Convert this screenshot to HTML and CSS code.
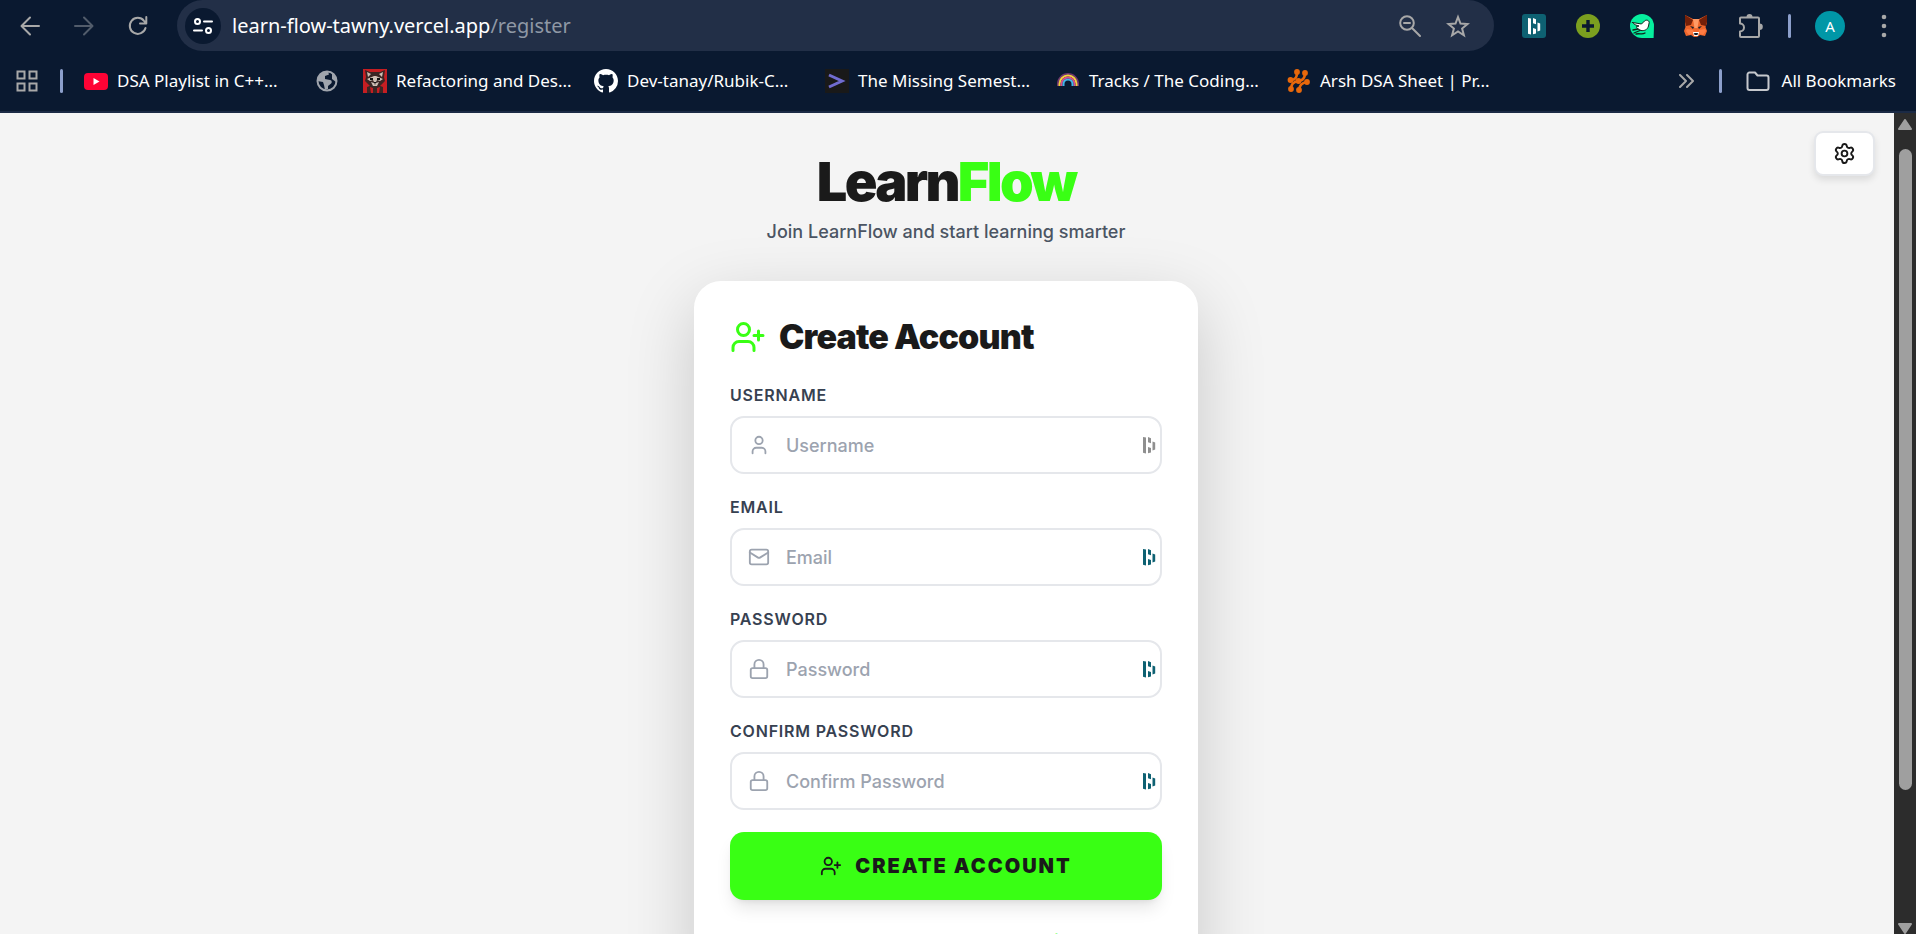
FILE: index.html
```
<!DOCTYPE html>
<html lang="en">
<head>
<meta charset="utf-8">
<title>LearnFlow - Register</title>
<link rel="stylesheet" href="styles.css">
</head>
<body>
<svg class="defs" aria-hidden="true">
  <symbol id="user-plus" viewBox="0 0 24 24"><path d="M16 21v-2a4 4 0 0 0-4-4H6a4 4 0 0 0-4 4v2"/><circle cx="9" cy="7" r="4"/><path d="M19 8v6M22 11h-6"/></symbol>
  <symbol id="user" viewBox="0 0 24 24"><path d="M19 21v-2a4 4 0 0 0-4-4H9a4 4 0 0 0-4 4v2"/><circle cx="12" cy="7" r="4"/></symbol>
  <symbol id="mail" viewBox="0 0 24 24"><rect x="2" y="4" width="20" height="16" rx="2"/><path d="m22 7-8.97 5.7a1.94 1.94 0 0 1-2.06 0L2 7"/></symbol>
  <symbol id="lock" viewBox="0 0 24 24"><rect x="3" y="11" width="18" height="11" rx="2"/><path d="M7 11V7a5 5 0 0 1 10 0v4"/></symbol>
  <symbol id="settings" viewBox="0 0 24 24"><path d="M9.671 4.136a2.34 2.34 0 0 1 4.659 0 2.34 2.34 0 0 0 3.319 1.915 2.34 2.34 0 0 1 2.33 4.033 2.34 2.34 0 0 0 0 3.831 2.34 2.34 0 0 1-2.33 4.033 2.34 2.34 0 0 0-3.319 1.915 2.34 2.34 0 0 1-4.659 0 2.34 2.34 0 0 0-3.32-1.915 2.34 2.34 0 0 1-2.33-4.033 2.34 2.34 0 0 0 0-3.831A2.34 2.34 0 0 1 6.35 6.051a2.34 2.34 0 0 0 3.319-1.915"/><circle cx="12" cy="12" r="3"/></symbol>
  <symbol id="vault" viewBox="0 0 14 18"><path fill="currentColor" stroke="none" d="M1 1l3 .6v15.800l-3-.6zM6 1l3 1.200v5l-3-1zM6 11l3 1v4.600l-3 .6zM10.500 5.500l2.700 1v7l-2.700 1z"/></symbol>
</svg>

<header class="browser">
  <div class="toolbar">
    <div class="nav">
      <button class="bare" aria-label="Back"><svg class="i20" viewBox="0 0 20 20"><path d="M19 10H2M10 1.500 1.500 10l8.500 8.500"/></svg></button>
      <button class="bare dim" aria-label="Forward"><svg class="i20" viewBox="0 0 20 20"><path d="M1 10h17M10 1.500l8.500 8.500-8.500 8.500"/></svg></button>
      <button class="bare" aria-label="Reload"><svg class="i20" viewBox="0 0 20 20"><path d="M17.500 12A8 8 0 1 1 16 4.800L18 7M18.300 1v6.500H12"/></svg></button>
    </div>
    <div class="omnibox">
      <button class="bare site" aria-label="View site information"><svg class="i20" viewBox="0 0 20 20"><circle cx="4.500" cy="5.500" r="2.500"/><path d="M11 5.500h8M1 14.500h8"/><circle cx="15.500" cy="14.500" r="2.500"/></svg></button>
      <span class="url">learn-flow-tawny.vercel.app<span class="path">/register</span></span>
      <button class="bare" aria-label="Zoom"><svg class="i24" viewBox="0 0 24 24"><circle cx="9" cy="9" r="6.800"/><path d="M14 14l8 8M6 9h6"/></svg></button>
      <button class="bare" aria-label="Bookmark this tab"><svg class="i24" viewBox="0 0 24 24"><path stroke-linejoin="miter" d="M12 3l2.500 6.500 7 .5-5.400 4.500 1.800 6.800L12 17.500l-5.900 3.800 1.800-6.800L2.500 10l7-.5z"/></svg></button>
    </div>
    <div class="extensions">
      <button class="bare ext-vault" aria-label="Password manager"><svg class="v" viewBox="0 0 14 18"><use href="#vault"/></svg></button>
      <button class="bare" aria-label="Add"><svg class="i24 solid" viewBox="0 0 24 24"><circle cx="12" cy="12" r="12" fill="#7b9f1f"/><path fill="#0a1930" d="M10.300 6h3.400v4.300H18v3.400h-4.300V18h-3.400v-4.300H6v-3.400h4.300z"/></svg></button>
      <button class="bare" aria-label="Bird"><svg class="i24 solid" viewBox="0 0 24 24"><path fill="#06ef9e" d="M12 0a12 12 0 0 1 12 12l-.4 12H12A12 12 0 0 1 12 0z"/><path fill="#fff" stroke="#10231c" stroke-width="1" d="M2.500 8.500l9 1.500 3-3c1.500-1.500 4.500-1 4.700 1.500L18.500 12c-1 4-4.500 5-7.500 4.500L8 15c-1-.6-1.500-1.600-1.500-2.500L9 12C6.500 11.500 4 10.500 2.500 8.500z"/><path fill="none" stroke="#10231c" stroke-width="1.300" d="M4 19l6-2.500M6 20c4-1 6 1 9-1M3 16l5-1"/></svg></button>
      <button class="bare" aria-label="Wallet"><svg class="i24 solid" viewBox="0 0 24 24"><path fill="#f0662b" d="M1 1l8 4h6l8-4 0 8-1.500 4 1.500 4-2 5-5-1-3 2h-3l-3-2-5 1-2-5 1.500-4L1 9z"/><path fill="#752008" d="M1 1l8 5-2 5-5 1L1 8zM23 1l-8 5 2 5 5 1 1-4z"/><path fill="#ff9a65" d="M9 5h6l-1.500 9h-3z"/><path fill="#ff7c43" d="M3 15l6 1 1 3-5 2-3-4zM21 15l-6 1-1 3 5 2 3-4z"/><path fill="#16202e" d="M6 12l4 1-1 2zM18 12l-4 1 1 2z"/><path fill="#fff" d="M9 18h6l-1 4h-4z"/><path fill="#16202e" d="M10 19h4l-.5 2h-3z"/></svg></button>
      <button class="bare" aria-label="Extensions"><svg class="puzzle" viewBox="0 0 26 26"><path d="M3 4.500H20a1 1 0 0 1 1 1V23a1 1 0 0 1-1 1H3a1 1 0 0 1-1-1v-4.500a4 4 0 0 0 0-8V5.500a1 1 0 0 1 1-1z"/><path fill="currentColor" stroke="none" d="M8.500 4a3 3 0 0 1 6 0zM21.500 10.500a3.300 3.300 0 0 1 0 6.600z"/></svg></button>
      <span class="rule"></span>
      <button class="bare avatar" aria-label="Profile">A</button>
      <button class="bare menu" aria-label="Menu"><svg viewBox="0 0 6 24" class="solid"><g fill="currentColor"><circle cx="3" cy="3" r="2.300"/><circle cx="3" cy="12" r="2.300"/><circle cx="3" cy="21" r="2.300"/></g></svg></button>
    </div>
  </div>
  <nav class="bookmarks" aria-label="Bookmarks">
    <button class="bare apps" aria-label="Apps"><svg class="i24" viewBox="0 0 24 24"><path stroke-linejoin="miter" d="M2.500 2.500h7v7h-7zM14.500 2.500h7v7h-7zM2.500 14.500h7v7h-7zM14.500 14.500h7v7h-7z"/></svg></button>
    <span class="rule"></span>
    <div class="links">
      <a class="mark" href="#"><svg class="i24 solid" viewBox="0 0 24 24"><rect y="4" width="24" height="17" rx="4" fill="#ff0335"/><path fill="#fff" d="M9.500 9l6 3.500-6 3.500z"/></svg><span>DSA Playlist in C++...</span></a>
      <a class="mark globe" href="#" aria-label="Website"><svg class="i24 solid" viewBox="0 0 24 24"><circle cx="12" cy="12" r="9.500" fill="none" stroke="#a0a5ad" stroke-width="2"/><path fill="#a0a5ad" d="M2 12C3 6 7 2 13 2.500l1 3-4 1.500v3l5 1c2 0 2.500 3 .5 4l-2.500 2v3l-3 1-1-5-1-3z M17 4l4 5v4l-4-3z"/></svg></a>
      <a class="mark" href="#"><svg class="i24 solid" viewBox="0 0 24 24"><path fill="#c51e22" d="M0 0h24v24H0z"/><path fill="#3b2624" d="M2 1l5 2h10l5-2-1 7 1 4-5 5H7l-5-5 1-4zM4 18l8-3 8 3v6H4z"/><path fill="#cfc0b5" d="M4 3l4 2-3 3zM20 3l-4 2 3 3zM4 10l7-3h2l7 3-3 2-3-1-2 4-2-4-3 1zM8 13l3 1 1 2 1-2 3-1-2 4h-4z"/><path fill="#111" d="M7 9h3v2H7zM14 9h3v2h-3zM11 13h2v1h-2z"/><path fill="#c51e22" d="M7 18l3 1v5H8zM17 18l-3 1v5h2z"/></svg><span>Refactoring and Des...</span></a>
      <a class="mark" href="#"><svg class="i24 solid" viewBox="0 0 16 16"><path fill="#fff" d="M8 0C3.580 0 0 3.580 0 8c0 3.540 2.290 6.530 5.470 7.590.4.070.55-.17.55-.38 0-.19-.01-.82-.01-1.490-2.010.37-2.530-.49-2.690-.94-.09-.23-.48-.94-.82-1.130-.28-.15-.68-.52-.01-.53.63-.01 1.080.58 1.230.82.72 1.210 1.870.87 2.330.66.070-.52.280-.87.510-1.070-1.780-.2-3.640-.89-3.640-3.950 0-.87.310-1.590.820-2.150-.08-.2-.36-1.020.080-2.120 0 0 .67-.21 2.200.82.64-.18 1.320-.27 2-.27s1.360.09 2 .27c1.530-1.040 2.200-.82 2.200-.82.44 1.100.16 1.920.080 2.120.51.56.820 1.270.820 2.150 0 3.070-1.870 3.750-3.650 3.950.29.25.540.730.540 1.480 0 1.070-.01 1.930-.01 2.200 0 .21.150.46.550.38A8.010 8.010 0 0 0 16 8c0-4.420-3.580-8-8-8z"/></svg><span>Dev-tanay/Rubik-C...</span></a>
      <a class="mark" href="#"><svg class="i24 solid" viewBox="0 0 24 24"><path fill="#191919" d="M0 0h24v24H0z"/><path fill="none" stroke="#706cd0" stroke-width="3" stroke-linecap="butt" stroke-linejoin="miter" d="M4 6l13 6-13 6"/></svg><span>The Missing Semest...</span></a>
      <a class="mark" href="#"><svg class="i24 solid" viewBox="0 0 24 24"><g fill="none" stroke-width="2" stroke-linecap="butt"><path stroke="#6f376f" d="M2 17v-2a10 10 0 0 1 20 0v2"/><path stroke="#f2d23c" d="M3.500 17v-2a8.500 8.500 0 0 1 17 0v2"/><path stroke="#d9508d" d="M5.500 17v-2a6.500 6.500 0 0 1 13 0v2"/><path stroke="#40b6e8" d="M7.500 17v-2a4.500 4.500 0 0 1 9 0v2"/></g></svg><span>Tracks / The Coding...</span></a>
      <a class="mark" href="#"><svg class="i24 solid" viewBox="0 0 24 24"><g fill="#e8680b"><circle cx="10" cy="3" r="2.900"/><circle cx="18" cy="4" r="2.900"/><circle cx="3.500" cy="11" r="2.900"/><circle cx="11.500" cy="12" r="2.900"/><circle cx="20" cy="13" r="2.900"/><circle cx="4" cy="20" r="2.900"/><circle cx="12" cy="21" r="2.900"/></g><path fill="none" stroke="#e8680b" stroke-width="2.600" d="M10 3c0 5-1 7.500-6.500 8M18 4c0 5-2 7.500-6.500 8-5 .5-7.500 3-7.500 8M20 13c-5 .5-7.500 3-8 8"/></svg><span>Arsh DSA Sheet | Pr...</span></a>
    </div>
    <button class="bare more" aria-label="More bookmarks"><svg viewBox="0 0 16 14"><path d="M2 1l6 6-6 6M9 1l6 6-6 6"/></svg></button>
    <span class="rule"></span>
    <a class="all" href="#"><svg class="i24" viewBox="0 0 24 24"><path d="M1.500 5.500a2 2 0 0 1 2-2H9l2.500 3h9a2 2 0 0 1 2 2V19a2 2 0 0 1-2 2h-17a2 2 0 0 1-2-2z"/></svg>All Bookmarks</a>
  </nav>
</header>

<div class="viewport">
  <main class="page">
    <button class="settings" aria-label="Settings"><svg viewBox="0 0 24 24"><use href="#settings"/></svg></button>
    <h1 class="logo">Learn<span>Flow</span></h1>
    <p class="tagline">Join LearnFlow and start learning smarter</p>
    <form class="card">
      <h2 class="heading"><svg viewBox="0 0 24 24"><use href="#user-plus"/></svg>Create Account</h2>
      <div class="field">
        <label for="username">Username</label>
        <div class="box"><svg class="lead" viewBox="0 0 24 24"><use href="#user"/></svg><input id="username" type="text" placeholder="Username"><svg class="v gray" viewBox="0 0 14 18"><use href="#vault"/></svg></div>
      </div>
      <div class="field">
        <label for="email">Email</label>
        <div class="box"><svg class="lead" viewBox="0 0 24 24"><use href="#mail"/></svg><input id="email" type="email" placeholder="Email"><svg class="v" viewBox="0 0 14 18"><use href="#vault"/></svg></div>
      </div>
      <div class="field">
        <label for="password">Password</label>
        <div class="box"><svg class="lead" viewBox="0 0 24 24"><use href="#lock"/></svg><input id="password" type="password" placeholder="Password"><svg class="v" viewBox="0 0 14 18"><use href="#vault"/></svg></div>
      </div>
      <div class="field">
        <label for="confirm">Confirm Password</label>
        <div class="box"><svg class="lead" viewBox="0 0 24 24"><use href="#lock"/></svg><input id="confirm" type="password" placeholder="Confirm Password"><svg class="v" viewBox="0 0 14 18"><use href="#vault"/></svg></div>
      </div>
      <button class="submit" type="submit"><svg viewBox="0 0 24 24"><use href="#user-plus"/></svg>Create Account</button>
      <p class="switch">Already have an account? <a href="#">Login</a></p>
    </form>
  </main>
  <div class="scrollbar" aria-hidden="true">
    <svg viewBox="0 0 14 11"><path d="M7 1l6 9H1z"/></svg>
    <span class="thumb"></span>
    <span class="rest"></span>
    <svg viewBox="0 0 14 11"><path d="M7 10L1 1h12z"/></svg>
  </div>
</div>
</body>
</html>
```
FILE: styles.css
```
* { box-sizing: border-box; }
body {
  margin: 0;
  height: 100vh;
  display: flex;
  flex-direction: column;
  overflow: hidden;
  font-family: Inter, "Liberation Sans", sans-serif;
}
h1, h2, p { margin: 0; }
button, input { font: inherit; }
button { cursor: pointer; }
svg {
  display: block;
  flex: none;
  fill: none;
  stroke: currentColor;
  stroke-width: 2;
  stroke-linecap: round;
  stroke-linejoin: round;
}
.defs { position: absolute; width: 0; height: 0; }
.solid { stroke: none; }

/* Browser chrome */
.browser {
  flex: none;
  background: #0a1930;
  border-bottom: 2px solid #1b2a45;
  color: #fff;
  font-family: "Noto Sans", "Open Sans", sans-serif;
}
.bare {
  display: flex;
  align-items: center;
  justify-content: center;
  padding: 0;
  border: 0;
  background: none;
  color: #a8a8a8;
}
.dim { color: #525c6b; }
.i20 { width: 20px; height: 20px; }
.i24 { width: 24px; height: 24px; }
.rule { flex: none; width: 3px; height: 24px; border-radius: 2px; background: #8c9fcb; }
.toolbar { display: flex; align-items: center; height: 51px; padding: 0 29px 0 20px; }
.nav { display: flex; gap: 34px; padding-right: 29px; }
.omnibox {
  flex: 1;
  display: flex;
  align-items: center;
  gap: 24px;
  height: 51px;
  padding: 0 24px 0 8px;
  border-radius: 26px;
  background: #222f47;
}
.site { width: 36px; height: 36px; border-radius: 50%; background: #0a1930; color: #fff; }
.url { flex: 1; margin-left: -13px; font-size: 20px; line-height: 26px; white-space: nowrap; }
.path { color: #8f98a5; }
.extensions { display: flex; align-items: center; gap: 30px; padding-left: 28px; }
.ext-vault { width: 24px; height: 24px; border-radius: 3px; background: #0e6172; color: #fff; }
.puzzle { width: 26px; height: 26px; }
.avatar { width: 30px; height: 30px; margin-left: -6px; border-radius: 50%; background: #0097a7; color: #fff; font-size: 15px; }
.extensions .rule { margin-left: -6px; }
.menu { margin-left: 6px; }
.menu svg { width: 6px; height: 24px; }
.bookmarks { display: flex; align-items: center; height: 60px; padding: 0 20px 0 15px; font-size: 17px; line-height: 24px; }
.bookmarks .apps { margin-right: 21px; }
.links { flex: 1; display: flex; min-width: 0; margin-left: 21px; overflow: hidden; }
.mark { flex: none; display: flex; align-items: center; gap: 9px; width: 231px; color: #fff; text-decoration: none; white-space: nowrap; }
.globe { width: 48px; }
.more svg { width: 16px; height: 14px; }
.more { margin-right: 25px; }
.all { display: flex; align-items: center; gap: 12px; margin-left: 24px; color: #fff; text-decoration: none; white-space: nowrap; }
.all svg { color: #c5c8cd; }

/* Page */
.viewport { flex: 1; min-height: 0; display: flex; background: #f4f4f4; }
.page {
  position: relative;
  flex: 1;
  display: flex;
  flex-direction: column;
  align-items: center;
  padding: 36px 20px 36px 18px;
  overflow: hidden;
}
.settings {
  position: absolute;
  top: 18px;
  right: 19px;
  display: flex;
  padding: 9px 17px;
  border: 2px solid #e5e7eb;
  border-radius: 9px;
  background: #fff;
  color: #1a1a1a;
  box-shadow: 0 4px 7px rgba(0, 0, 0, .1);
}
.settings svg { width: 23px; height: 23px; }
.logo { font-size: 54px; line-height: 66px; font-weight: 900; letter-spacing: -.05em; color: #1a1a1a; }
.logo span { color: #39ff14; }
.tagline { margin-top: 3px; font-size: 18px; line-height: 27px; font-weight: 500; color: #4b5563; }
.card {
  flex: none;
  width: 100%;
  max-width: 504px;
  margin-top: 36px;
  padding: 36px;
  border-radius: 27px;
  background: #fff;
  box-shadow: 0 22px 68px rgba(0, 0, 0, .18);
}
.heading {
  display: flex;
  align-items: center;
  gap: 13px;
  margin-bottom: 27px;
  font-size: 34px;
  line-height: 40px;
  font-weight: 900;
  letter-spacing: -.025em;
  color: #1a1a1a;
}
.heading svg { width: 36px; height: 36px; color: #39ff14; }
.field { margin-bottom: 22px; }
.field label {
  display: block;
  margin-bottom: 10px;
  font-size: 16px;
  line-height: 22px;
  font-weight: 600;
  letter-spacing: .05em;
  text-transform: uppercase;
  color: #374151;
}
.box {
  display: flex;
  align-items: center;
  height: 58px;
  padding: 0 4px 0 16px;
  border: 2px solid #e5e7eb;
  border-radius: 14px;
  background: #fff;
}
.lead { width: 22px; height: 22px; color: #9ca3af; }
.box input {
  flex: 1;
  min-width: 0;
  padding: 0 16px;
  border: 0;
  outline: 0;
  background: none;
  font-size: 18px;
  line-height: 27px;
  font-weight: 500;
  color: #1a1a1a;
}
.box input::placeholder { color: #9ca3af; opacity: 1; }
.v { width: 14px; height: 18px; color: #0e6172; }
.v.gray { color: #8f8f8f; }
.ext-vault .v { color: #fff; }
.submit {
  display: flex;
  align-items: center;
  justify-content: center;
  gap: 13px;
  width: 100%;
  height: 68px;
  border: 0;
  border-radius: 14px;
  background: #39ff14;
  box-shadow: 0 11px 17px -3px rgba(0, 0, 0, .1), 0 4px 7px -4px rgba(0, 0, 0, .1);
  font-size: 20px;
  line-height: 32px;
  font-weight: 900;
  letter-spacing: .1em;
  text-transform: uppercase;
  color: #1a1a1a;
}
.submit svg { width: 22px; height: 22px; }
.switch { margin-top: 27px; text-align: center; font-size: 16px; line-height: 27px; font-weight: 500; color: #4b5563; }
.switch a { font-weight: 700; color: #39ff14; text-decoration: none; }

/* Scrollbar */
.scrollbar {
  flex: none;
  display: flex;
  flex-direction: column;
  align-items: center;
  width: 22px;
  padding-top: 6px;
  background: #2c2c2c;
  color: #9f9f9f;
}
.scrollbar svg { width: 14px; height: 11px; fill: currentColor; }
.thumb { flex: 641; width: 13px; margin-top: 19px; border-radius: 7px; background: #9f9f9f; }
.rest { flex: 133; }
```
